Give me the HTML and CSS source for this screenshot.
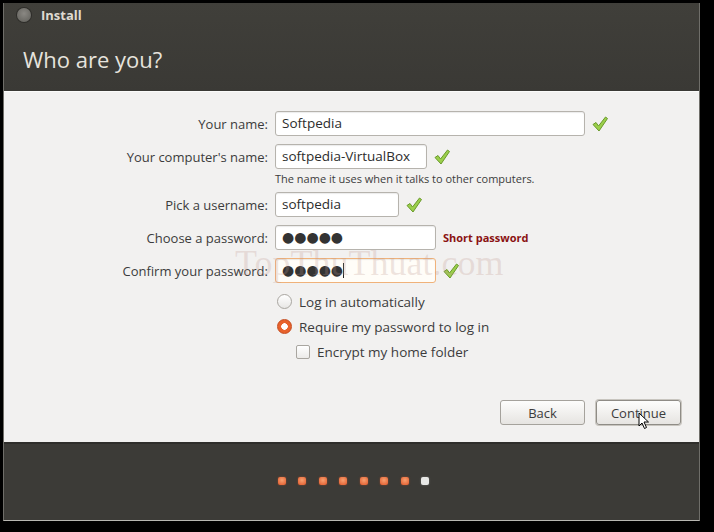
FILE: index.html
```html
<!DOCTYPE html>
<html>
<head>
<meta charset="utf-8">
<link rel="stylesheet" href="styles.css">
</head>
<body>
<div class="window">
  <header class="head">
    <div class="titlebar">
      <span class="close"></span>
      <span class="apptitle">Install</span>
    </div>
    <h1 class="pagetitle">Who are you?</h1>
  </header>
  <main class="content">
    <div class="form">
      <div class="row">
        <label class="label">Your name:</label>
        <div class="field w-name">Softpedia</div>
        <svg class="check" viewBox="0 0 18 18"><path d="M2 9.5 L5 7.5 L7.5 11 L14.5 2 L16.5 3.5 L8 16 Z" fill="#9bcf4b" stroke="#6a9a2a" stroke-width="1" stroke-linejoin="round"/></svg>
      </div>
      <div class="row">
        <label class="label">Your computer's name:</label>
        <div class="field w-comp">softpedia-VirtualBox</div>
        <svg class="check" viewBox="0 0 18 18"><path d="M2 9.5 L5 7.5 L7.5 11 L14.5 2 L16.5 3.5 L8 16 Z" fill="#9bcf4b" stroke="#6a9a2a" stroke-width="1" stroke-linejoin="round"/></svg>
      </div>
      <div class="hint">The name it uses when it talks to other computers.</div>
      <div class="row">
        <label class="label">Pick a username:</label>
        <div class="field w-user">softpedia</div>
        <svg class="check" viewBox="0 0 18 18"><path d="M2 9.5 L5 7.5 L7.5 11 L14.5 2 L16.5 3.5 L8 16 Z" fill="#9bcf4b" stroke="#6a9a2a" stroke-width="1" stroke-linejoin="round"/></svg>
      </div>
      <div class="row">
        <label class="label">Choose a password:</label>
        <div class="field w-pass"><span class="dots">●●●●●</span></div>
        <span class="short">Short password</span>
      </div>
      <div class="row">
        <label class="label">Confirm your password:</label>
        <div class="field w-pass focus"><span class="dots">●●●●●</span><span class="caret"></span></div>
        <svg class="check" viewBox="0 0 18 18"><path d="M2 9.5 L5 7.5 L7.5 11 L14.5 2 L16.5 3.5 L8 16 Z" fill="#9bcf4b" stroke="#6a9a2a" stroke-width="1" stroke-linejoin="round"/></svg>
      </div>
      <div class="options">
        <div class="opt"><span class="radio"></span>Log in automatically</div>
        <div class="opt"><span class="radio on"></span>Require my password to log in</div>
        <div class="opt sub"><span class="box"></span>Encrypt my home folder</div>
      </div>
    </div>
    <div class="buttons">
      <button class="btn">Back</button>
      <button class="btn default">Continue</button>
    </div>
    <div class="watermark">TopThuThuat.com</div>
    <svg class="cursor" viewBox="0 0 12 18"><path d="M1 1 L1 14 L4 11 L6.5 16.5 L8.5 15.5 L6 10 L10.5 10 Z" fill="#fff" stroke="#000" stroke-width="1" stroke-linejoin="round"/></svg>
  </main>
  <footer class="foot">
    <span class="dot"></span><span class="dot"></span><span class="dot"></span><span class="dot"></span><span class="dot"></span><span class="dot"></span><span class="dot"></span><span class="dot cur"></span>
  </footer>
</div>
</body>
</html>
```
FILE: styles.css
```css
* { box-sizing: border-box; }
html, body { margin: 0; padding: 0; }
body {
  background: #000;
  width: 714px;
  height: 532px;
  overflow: hidden;
  font-family: "Open Sans", "DejaVu Sans", sans-serif;
  padding: 3px 0 0 3px;
}
.window {
  width: 697px;
  height: 518px;
  display: flex;
  flex-direction: column;
  background: #3c3b37;
  border-left: 1px solid #6f6e69;
  border-right: 1px solid #6f6e69;
  border-bottom: 1px solid #b8b7b2;
}
.head {
  height: 88px;
  background: linear-gradient(#403f3a, #3a3935);
  color: #dfdbd2;
  flex: none;
}
.titlebar {
  display: flex;
  align-items: center;
  height: 24px;
  padding-left: 13px;
  gap: 10px;
}
.close {
  width: 14px;
  height: 14px;
  border-radius: 50%;
  background: radial-gradient(circle at 50% 40%, #8a8883, #5e5d58);
  box-shadow: 0 0 0 1px #2e2d2a;
}
.apptitle {
  font-weight: bold;
  font-size: 13px;
  color: #dfdbd2;
}
.pagetitle {
  margin: 0;
  padding: 17px 0 0 19px;
  font-weight: normal;
  font-size: 22px;
  line-height: 30px;
  color: #e6e3dd;
}
.content {
  position: relative;
  flex: none;
  height: 351px;
  background: #f2f1f0;
  border-top: 1px solid #fbfbfa;
  display: flex;
  flex-direction: column;
}
.form {
  padding-top: 19px;
  display: flex;
  flex-direction: column;
  gap: 8px;
}
.row {
  display: flex;
  align-items: center;
  height: 25px;
}
.label {
  width: 271px;
  text-align: right;
  padding-right: 7px;
  font-size: 13px;
  color: #3c3c3c;
}
.field {
  height: 25px;
  border: 1px solid #b6b3ad;
  border-radius: 3px;
  background: #fff;
  box-shadow: inset 0 1px 1px rgba(0,0,0,0.08);
  font-size: 13.5px;
  line-height: 23px;
  padding-left: 6px;
  color: #2c2c2c;
  display: flex;
  align-items: center;
}
.w-name { width: 310px; }
.w-comp { width: 152px; }
.w-user { width: 124px; }
.w-pass { width: 161px; }
.field.focus { border-color: #f0b27a; background: #fffdf8; }
.dots { font-size: 14px; letter-spacing: 0; color: #333; font-family: "DejaVu Sans", sans-serif; }
.caret { width: 1px; height: 15px; background: #222; }
.check { width: 18px; height: 18px; margin-left: 6px; }
.short {
  margin-left: 7px;
  font-size: 11px;
  font-weight: bold;
  color: #8a1212;
}
.hint {
  margin: -5px 0 -1px 271px;
  font-size: 11px;
  color: #3c3c3c;
  height: 13px;
  line-height: 13px;
}
.options {
  margin-left: 273px;
  padding-top: 2px;
  display: flex;
  flex-direction: column;
  gap: 8px;
}
.opt {
  display: flex;
  align-items: center;
  height: 17px;
  font-size: 13.5px;
  color: #3c3c3c;
  gap: 7px;
}
.radio {
  width: 15px;
  height: 15px;
  border-radius: 50%;
  border: 1px solid #a9a6a0;
  background: linear-gradient(#fff, #e8e7e5);
}
.radio.on {
  border: 1px solid #c54a1c;
  background: radial-gradient(circle, #fff 0 3px, #e8622c 3.5px);
}
.opt.sub { margin-left: 19px; }
.box {
  width: 14px;
  height: 14px;
  border-radius: 2px;
  border: 1px solid #a9a6a0;
  background: linear-gradient(#fff, #ecebe9);
}
.buttons {
  margin-top: auto;
  margin-bottom: 17px;
  display: flex;
  justify-content: flex-end;
  gap: 11px;
  padding-right: 18px;
}
.btn {
  width: 85px;
  height: 25px;
  font-family: inherit;
  font-size: 13px;
  color: #3c3c3c;
  border: 1px solid #a5a29c;
  border-radius: 3px;
  background: linear-gradient(#fdfdfc, #e6e4e1);
  padding: 0;
}
.btn.default {
  box-shadow: 0 0 0 1px #c8c5bf;
  border-color: #8f8c86;
}
.watermark {
  position: absolute;
  left: 231px;
  top: 156px;
  font-family: "Liberation Serif", serif;
  font-size: 36px;
  line-height: 30px;
  color: rgba(190, 150, 140, 0.25);
  pointer-events: none;
}
.cursor {
  position: absolute;
  left: 634px;
  top: 320px;
  width: 12px;
  height: 18px;
}
.foot {
  flex: 1;
  background: #3c3b37;
  border-top: 2px solid #2f2e2b;
  display: flex;
  justify-content: center;
  align-items: center;
  gap: 12.5px;
  padding-left: 4px;
  padding-bottom: 2px;
}
.dot {
  width: 8px;
  height: 8px;
  border-radius: 2px;
  background: radial-gradient(circle at 50% 40%, #f7a070, #e0582a);
  box-shadow: 0 0 2px rgba(230, 90, 40, 0.5);
}
.dot.cur {
  background: #e8e8e6;
  box-shadow: 0 0 2px rgba(255,255,255,0.3);
}
```
